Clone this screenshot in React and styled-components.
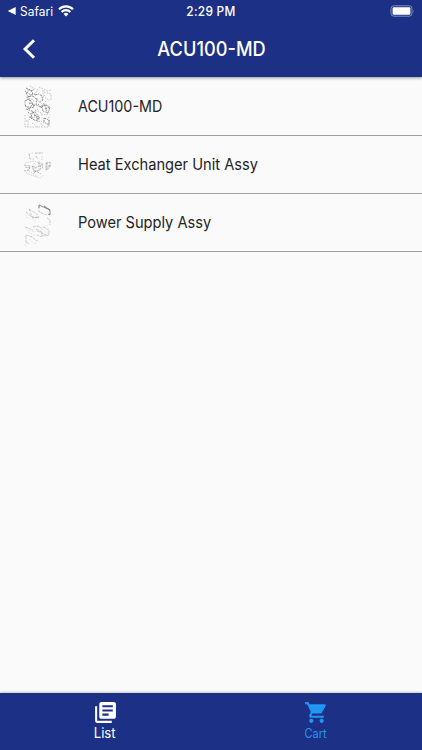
import React from "react";
import styled, { createGlobalStyle } from "styled-components";

const Global = createGlobalStyle`
  * { box-sizing: border-box; }
  html, body { margin: 0; height: 100%; overflow: hidden; }
  body { font-family: Inter, "Liberation Sans", sans-serif; background: #fafafa; }
`;

const Screen = styled.div`
  width: 422px;
  height: 750px;
  display: flex;
  flex-direction: column;
  background: #fafafa;
  overflow: hidden;
`;

const Header = styled.header`
  height: 77px;
  flex: none;
  background: #1c3185;
  color: #fff;
  box-shadow: 0 1px 3px rgba(0, 0, 0, 0.4);
  z-index: 1;
`;

const StatusBar = styled.div`
  height: 22px;
  display: grid;
  grid-template-columns: 1fr auto 1fr;
  align-items: center;
  padding: 0 8px 0 7px;
`;

const BackToApp = styled.div`
  display: flex;
  align-items: center;
`;

const Label = styled.span`
  display: block;
  white-space: nowrap;
  font-size: ${(p) => p.$size}px;
  font-weight: ${(p) => p.$weight || 400};
  line-height: ${(p) => p.$line || 20}px;
  letter-spacing: ${(p) => p.$track || 0}px;
  transform: scaleX(${(p) => p.$narrow || 1});
  transform-origin: ${(p) => p.$origin || "left"} center;
`;

const AppName = styled.div`
  width: 38px;
  margin-left: 4px;
  padding-top: 1px;
`;

const Clock = styled.div`
  padding: 1px 0 0 1px;
`;

const BatterySlot = styled.div`
  display: flex;
  justify-content: flex-end;
  padding-bottom: 1px;
`;

const TitleBar = styled.div`
  height: 54px;
  display: grid;
  grid-template-columns: 58px 1fr 58px;
  align-items: center;
  justify-items: center;
`;

const BackButton = styled.button`
  border: 0;
  padding: 0;
  background: none;
  color: inherit;
  display: flex;
`;

const List = styled.main`
  flex: 1;
  padding-top: 1px;
`;

const Row = styled.div`
  height: 58px;
  display: flex;
  align-items: center;
  padding: 0 0 2px 14px;
  border-bottom: 1px solid #9f9f9f;
  color: #242424;
`;

const Thumb = styled.svg`
  width: 50px;
  height: 50px;
  margin-right: 14px;
  flex: none;
  fill: none;
  stroke: #555;
`;

const Footer = styled.nav`
  height: 57px;
  flex: none;
  display: grid;
  grid-template-columns: 1fr 1fr;
  background: #1c3185;
  box-shadow: 0 -1px 2px rgba(0, 0, 0, 0.2);
`;

const Tab = styled.div`
  display: flex;
  flex-direction: column;
  align-items: center;
  padding-top: 7px;
  color: ${(p) => p.$color};
  svg { display: block; fill: currentColor; }
`;

const TabText = styled.div`
  margin-top: ${(p) => p.$shift || 0}px;
  padding-right: 1px;
`;

const ExplodedView = () => (
  <Thumb viewBox="0 0 50 50">
    <g strokeWidth=".9" opacity=".7">
      <path strokeDasharray="2.5 .8 1 1" d="M12 7l5 3 4-2M12 13l3-5 4 4-4 4zM13 16l6-1 3 3M11 20l4-2 4 5-4 5-4-4zM15 22l5 1-1 4M21 14l4-1 3 2 1 4-4 2M23 17l-1 7 5 2 4-2M28 26l2-3 6 3-2 6-5-2zM31 28l5-2M12 28l6 2 4 5 4 2M18 32l3-1 4 5-3 4-5-3zM15 36l4 1M30 37l5 2v5l-5-3zM22 39l3 2" />
      <path strokeDasharray="1.5 1" d="M11 10l6 4 4-1M13 18l4 2M11 25l7 2 3-3M24 23l3 4 2-2M31 24l2 7M20 34l5 4M14 31l4 3" />
    </g>
    <g strokeWidth=".8" opacity=".42">
      <path strokeDasharray="1.5 1.3" d="M16 5l5 3M25 6l8 4 4-1M29 9v6l7 5M11 34v12h24V35M21 29l8 4M24 8l-3 5M32 20l-5 5M12 40l9-4 9 6M21 17l11 9M30 11l7 2v6M14 40v6M18 42l6 4M25 40l4 5M31 14l-3 4M20 19l-4 8M24 28l-5 4M27 34l9-1M12 16l8 3" />
    </g>
  </Thumb>
);

const HeatExchangerView = () => (
  <Thumb viewBox="0 0 50 50">
    <g strokeWidth=".75" opacity=".5">
      <path strokeDasharray="2.5 .8" d="M21 14h8M15 15l1 5M22 17l2 3M10 26l6 1-1 4-5 1M11 28l5 1M18 27l3 2 6-3-1 5-6 2zM20 31l7 4M32 24l4-1v5l-4 3zM33 24v7M34 27h3M24 24l5 2-1 4M22 32l-3 3" />
    </g>
    <path strokeWidth=".7" opacity=".32" strokeDasharray="1.5 1" d="M12 34l14 5 4-3M15 32l8 5M28 17v5M11 24l9-2 10 3M20 24v6M25 22v9M15 15l4-1M16 20h4" />
  </Thumb>
);

const PowerSupplyView = () => (
  <Thumb viewBox="0 0 50 50">
    <path strokeWidth=".9" opacity=".75" d="M25 11v-3l11 5v5l-2-1M30 9l6 4" />
    <g strokeWidth=".75" opacity=".38">
      <path strokeDasharray="3 .8" d="M25 9v6l8 3M15 12l8 5 2 4-7-1-1-3zM12 15l7 6 6-1M33 21l3 2v5M22 32l6 3v5l-5-2M29 30l6 3v5l-7 1M12 38l6 2 5 4M11 30l8 3M23 34l10 4M12 39v6l3 2M19 30l4-1 5 2" />
    </g>
    <path strokeWidth=".7" opacity=".22" strokeDasharray="1.5 1.5" d="M12 20l10 4M12 33l10 2M11 49l2-4M24 43l-3 5M14 35l9 4M15 42l6 5M28 32l6 5" />
  </Thumb>
);

const ITEMS = [
  { name: "ACU100-MD", View: ExplodedView, narrow: 0.895 },
  { name: "Heat Exchanger Unit Assy", View: HeatExchangerView, narrow: 0.915 },
  { name: "Power Supply Assy", View: PowerSupplyView, narrow: 0.913 },
];

export default function App() {
  return (
    <Screen>
      <Global />
      <Header>
        <StatusBar>
          <BackToApp>
            <svg width="9" height="10" viewBox="0 0 9 10"><path d="M.7 5L8.7 1v8z" fill="#fff" /></svg>
            <AppName><Label $size={12.5} $track={0.1} $narrow={0.95}>Safari</Label></AppName>
            <svg width="16" height="12" viewBox="0 0 16 12" fill="none" stroke="#fff" strokeWidth="2.1">
              <path d="M1 4.2a10 10 0 0 1 14 0M3.6 7a6.2 6.2 0 0 1 8.8 0" />
              <path d="M8 11.4L5.6 9a3.4 3.4 0 0 1 4.8 0z" fill="#fff" stroke="none" />
            </svg>
          </BackToApp>
          <Clock><Label $size={12.5} $weight={500} $track={0.3} $narrow={0.95} $origin="center">2:29 PM</Label></Clock>
          <BatterySlot>
            <svg width="24" height="12" viewBox="0 0 24 12">
              <rect x="1" y=".8" width="21" height="10.4" rx="2.8" fill="none" stroke="#828ebc" />
              <rect x="2.6" y="2.3" width="17.8" height="7.4" rx="1.2" fill="#fff" />
              <path d="M23 4.4q1 1.6 0 3.2z" fill="#828ebc" />
            </svg>
          </BatterySlot>
        </StatusBar>
        <TitleBar>
          <BackButton aria-label="Back">
            <svg width="14" height="22" viewBox="0 0 14 22" fill="none" stroke="#fff" strokeWidth="3"><path d="M12 2.2L3.1 11l8.900 8.800" /></svg>
          </BackButton>
          <Label $size={20} $weight={500} $narrow={0.91} $line={26} $origin="center">ACU100-MD</Label>
        </TitleBar>
      </Header>
      <List>
        {ITEMS.map(({ name, View, narrow }) => (
          <Row key={name}>
            <View />
            <Label $size={16} $narrow={narrow}>{name}</Label>
          </Row>
        ))}
      </List>
      <Footer>
        <Tab $color="#fff">
          <svg width="25" height="25" viewBox="0 0 24 24"><path d="M4 6H2v14c0 1.1.9 2 2 2h14v-2H4V6zm16-4H8c-1.100 0-2 .9-2 2v12c0 1.100.9 2 2 2h12c1.100 0 2-.9 2-2V4c0-1.100-.9-2-2-2zm-1 9H9V9h10v2zm-4 4H9v-2h6v2zm4-8H9V5h10v2z" /></svg>
          <TabText $shift={-1}><Label $size={14} $line={18} $origin="center" $narrow={0.94}>List</Label></TabText>
        </Tab>
        <Tab $color="#2196f3">
          <svg width="25" height="25" viewBox="0 0 24 24"><path d="M7 18c-1.100 0-1.990.9-1.990 2S5.900 22 7 22s2-.9 2-2-.9-2-2-2zM1 2v2h2l3.600 7.590-1.350 2.450c-.16.28-.25.61-.25.96 0 1.100.9 2 2 2h12v-2H7.420c-.14 0-.25-.11-.25-.25l.03-.12.9-1.630h7.450c.75 0 1.410-.41 1.750-1.030l3.580-6.490c.08-.14.12-.31.12-.48 0-.55-.45-1-1-1H5.210l-.94-2H1zm16 16c-1.100 0-1.990.9-1.990 2s.89 2 1.990 2 2-.9 2-2-.9-2-2-2z" /></svg>
          <TabText><Label $size={12.5} $line={18} $origin="center" $narrow={0.88}>Cart</Label></TabText>
        </Tab>
      </Footer>
    </Screen>
  );
}
